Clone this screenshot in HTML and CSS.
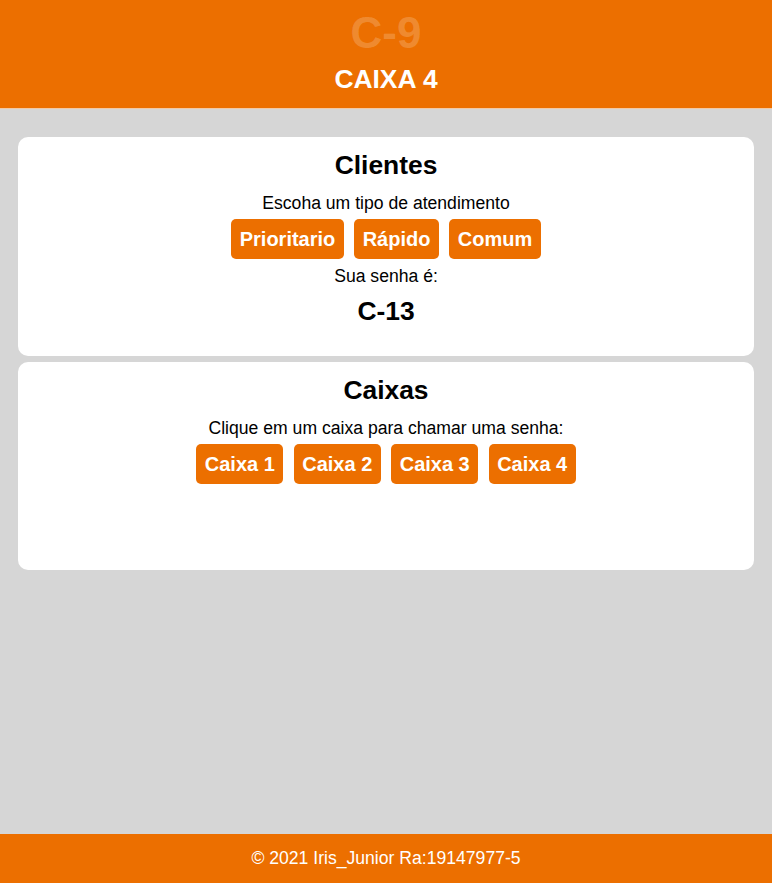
FILE: index.html
```html
<!DOCTYPE html>
<html lang="pt-BR">
<head>
<meta charset="utf-8">
<title>Senhas</title>
<link rel="stylesheet" href="styles.css">
</head>
<body>
<header class="topo">
  <div class="senha-atual">C-9</div>
  <div class="caixa-atual">CAIXA 4</div>
</header>
<main class="conteudo">
  <section class="cartao cartao-clientes">
    <h2 class="titulo">Clientes</h2>
    <p class="texto">Escoha um tipo de atendimento</p>
    <div class="botoes">
      <button class="botao">Prioritario</button>
      <button class="botao">Rápido</button>
      <button class="botao">Comum</button>
    </div>
    <p class="texto texto-senha">Sua senha é:</p>
    <div class="senha">C-13</div>
  </section>
  <section class="cartao cartao-caixas">
    <h2 class="titulo">Caixas</h2>
    <p class="texto">Clique em um caixa para chamar uma senha:</p>
    <div class="botoes">
      <button class="botao">Caixa 1</button>
      <button class="botao">Caixa 2</button>
      <button class="botao">Caixa 3</button>
      <button class="botao">Caixa 4</button>
    </div>
  </section>
</main>
<footer class="rodape">© 2021 Iris_Junior Ra:19147977-5</footer>
</body>
</html>
```
FILE: styles.css
```css
html, body {
  margin: 0;
  padding: 0;
}
body {
  font-family: "Liberation Sans", Arial, sans-serif;
  background: #d6d6d6;
  min-height: 100vh;
  display: flex;
  flex-direction: column;
  color: #000;
}
.topo {
  background: #ec6f00;
  height: 109px;
  border-bottom: 1px solid #f2c9a4;
  display: flex;
  flex-direction: column;
  align-items: center;
  box-sizing: border-box;
}
.senha-atual {
  font-size: 44px;
  font-weight: bold;
  color: rgba(255, 255, 255, 0.2);
  line-height: 50px;
  margin-top: 8px;
}
.caixa-atual {
  font-size: 26.4px;
  font-weight: bold;
  color: #fff;
  line-height: 30px;
  margin-top: 6px;
}
.conteudo {
  flex: 1;
  padding: 28px 18px 0;
  display: flex;
  flex-direction: column;
  gap: 6px;
}
.cartao {
  background: #fff;
  border-radius: 10px;
  display: flex;
  flex-direction: column;
  align-items: center;
}
.cartao-clientes {
  height: 219px;
  box-sizing: border-box;
  padding-top: 13px;
}
.cartao-caixas {
  height: 208px;
  box-sizing: border-box;
  padding-top: 13px;
}
.titulo {
  margin: 0;
  font-size: 26.4px;
  line-height: 30px;
  font-weight: bold;
}
.texto {
  margin: 13px 0 0;
  font-size: 17.6px;
  line-height: 20px;
}
.botoes {
  display: flex;
  gap: 10.4px;
  margin-top: 6px;
}
.botao {
  font-family: "Liberation Sans", Arial, sans-serif;
  background: #ec6f00;
  color: #fff;
  border: none;
  border-radius: 5px;
  height: 40px;
  padding: 0 8.5px;
  font-size: 20px;
  font-weight: bold;
}
.texto-senha {
  margin-top: 7px;
}
.senha {
  font-size: 26.4px;
  font-weight: bold;
  line-height: 30px;
  margin-top: 10px;
}
.rodape {
  background: #ec6f00;
  color: #fff;
  height: 49px;
  display: flex;
  align-items: center;
  justify-content: center;
  font-size: 17.6px;
}
```
